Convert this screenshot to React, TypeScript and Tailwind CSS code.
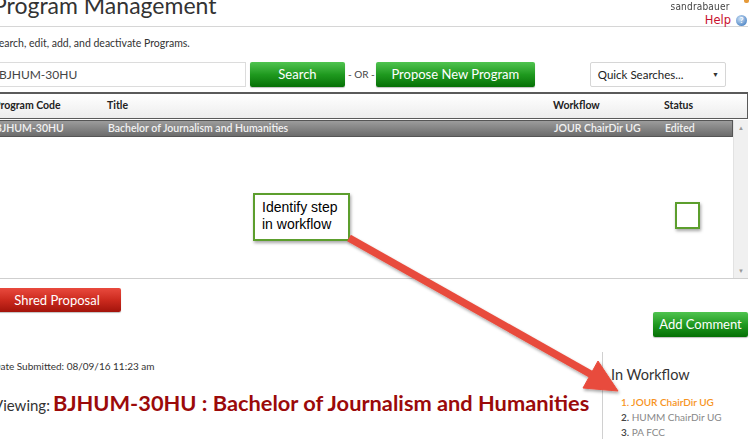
import React from "react";

const greenBtn =
    "h-[25px] rounded-[2px] bg-linear-to-b from-[#4fc44f] via-[#1f9a1f] to-[#057005] text-white text-[13px] leading-[25px] text-center shadow-[0_1px_1px_rgba(0,0,0,0.25)]";

function Annotation() {
    return (
        <>
            {/* callout box */}
            <div className="absolute left-[253px] top-[193px] w-[97px] h-[48px] bg-white border-2 border-[#5c9e2d] shadow-[1px_2px_3px_rgba(0,0,0,0.35)] px-[7px] pt-[4px] font-['Liberation_Sans',sans-serif] text-[14px] leading-[17px] text-black">
                Identify step
                <br />
                in workflow
            </div>
            {/* marker square */}
            <div className="absolute left-[675px] top-[202px] w-[25px] h-[27px] border-2 border-[#5c9e2d] bg-white shadow-[1px_2px_3px_rgba(0,0,0,0.35)]" />
            {/* arrow */}
            <svg className="absolute left-0 top-0 pointer-events-none" width="750" height="439" viewBox="0 0 750 439">
                <defs>
                    <filter id="sh" x="-10%" y="-10%" width="130%" height="130%">
                        <feDropShadow dx="1" dy="2" stdDeviation="1.5" floodColor="#000" floodOpacity="0.35" />
                    </filter>
                </defs>
                <g filter="url(#sh)" fill="#e84c3d" stroke="#e84c3d">
                    <line x1="349" y1="238" x2="594" y2="376" strokeWidth="7.5" />
                    <polygon points="618,391 583,388 598,361" strokeWidth="1" strokeLinejoin="round" />
                </g>
            </svg>
        </>
    );
}

export default function App() {
    return (
        <div className="relative w-[750px] h-[439px] overflow-hidden bg-white font-['Lato',sans-serif] text-[#333]">
            {/* bit of the user avatar peeking in at the corner */}
            <div className="absolute right-[1px] top-0 w-[5px] h-[3px] rounded-b-[2px] bg-[#e59a3a]" />
            <div className="-ml-[7px] w-[755px]">
                {/* Header */}
                <div className="h-[27px] border-b border-[#d6d6d6] flex justify-between items-start">
                    <h1 className="-mt-[8px] text-[23px] leading-[26px] text-[#333]">Program Management</h1>
                    <div className="flex flex-col items-end pr-[1px]">
                        <div className="mr-[17px] text-[10px] leading-[11px] mt-[1px] tracking-[0.2px] text-[#444] font-['DejaVu_Sans',sans-serif] scale-x-90 origin-right">
                            sandrabauer
                        </div>
                        <div className="flex items-center gap-[5px] mt-[1px]">
                            <span className="text-[11.5px] leading-[14px] text-[#c8102e] font-['DejaVu_Sans',sans-serif]">Help</span>
                            <span className="w-[11px] h-[11px] rounded-full bg-[radial-gradient(circle_at_40%_35%,#cfe3f7,#5b8fca_70%)] flex items-center justify-center text-white text-[8px] font-bold leading-none">
                                ?
                            </span>
                        </div>
                    </div>
                </div>

                <p className="mt-[9px] text-[10.5px] leading-[14px] text-[#333]">
                    Search, edit, add, and deactivate Programs.
                </p>

                {/* Search row */}
                <div className="mt-[12px] flex items-center">
                    <div className="w-[253px] h-[25px] border border-[#dcdcdc] pl-[5px] text-[12px] leading-[23px] text-[#444]">
                        BJHUM-30HU
                    </div>
                    <div className={`ml-[4px] w-[95px] ${greenBtn}`}>Search</div>
                    <span className="ml-[3px] text-[10px] text-[#444]">- OR -</span>
                    <div className={`ml-[1px] w-[159px] ${greenBtn}`}>Propose New Program</div>
                    <div className="ml-[55px] w-[136px] h-[25px] border border-[#d6d6d6] rounded-[2px] bg-white flex items-center justify-between pl-[7px] pr-[6px] text-[11.5px] text-[#222]">
                        <span>Quick Searches...</span>
                        <span className="text-[7px] text-[#333]">▼</span>
                    </div>
                </div>

                {/* Table */}
                <div className="mt-[5px] w-[755px] border-b border-[#cfcfcf]">
                    <div className="h-[27px] border-t-2 border-b border-r border-[#5a5a5a] bg-linear-to-b from-white to-[#ededed] grid grid-cols-[113px_446px_111px_1fr] pl-[1px] items-center text-[10.5px] font-bold text-[#222]">
                        <span>Program Code</span>
                        <span>Title</span>
                        <span>Workflow</span>
                        <span>Status</span>
                    </div>
                    <div className="flex mt-[1px]">
                        <div className="flex-1">
                            <div className="h-[17px] border border-[#555] bg-linear-to-b from-[#9c9c9c] to-[#6c6c6c] grid grid-cols-[113px_446px_111px_1fr] pl-[1px] items-center text-[10.5px] font-semibold text-[#f2f2f2]">
                                <span>BJHUM-30HU</span>
                                <span>Bachelor of Journalism and Humanities</span>
                                <span>JOUR ChairDir UG</span>
                                <span>Edited</span>
                            </div>
                        </div>
                        <div className="w-[15px] h-[158px] bg-[#f0f0f0] border-l border-[#e2e2e2] flex flex-col items-center justify-between py-[3px] text-[6px] text-[#999]">
                            <span>▲</span>
                            <span>▼</span>
                        </div>
                    </div>
                </div>

                {/* Actions */}
                <div className="mt-[9px] w-[128px] h-[24px] rounded-[2px] bg-linear-to-b from-[#e9493d] via-[#cc2a1e] to-[#a3130b] text-white text-[13px] leading-[24px] text-center shadow-[0_1px_1px_rgba(0,0,0,0.25)]">
                    Shred Proposal
                </div>
                <div className="flex justify-end">
                    <div className={`w-[95px] ${greenBtn}`}>Add Comment</div>
                </div>

                {/* Lower section */}
                <div className="mt-[15px] flex">
                    <div className="w-[609px]">
                        <div className="mt-[7px] text-[10px] leading-[14px] text-[#333]">
                            Date Submitted: 08/09/16 11:23 am
                        </div>
                        <div className="mt-[17px] flex items-baseline">
                            <span className="text-[15px] text-[#333]">Viewing:</span>
                            <span className="ml-[3px] text-[21.8px] font-bold text-[#9b0a0a] leading-[26px]">
                                BJHUM-30HU : Bachelor of Journalism and Humanities
                            </span>
                        </div>
                    </div>
                    <div className="flex-1 h-[90px] border-l border-[#d0d0d0] pl-[8px]">
                        <div className="mt-[14px] text-[14.5px] leading-[18px] text-[#333]">In Workflow</div>
                        <ol className="mt-[11px] pl-[10px] text-[10px] leading-[15px]">
                            <li className="text-[#f7941d] font-semibold">1. JOUR ChairDir UG</li>
                            <li className="text-[#888]">
                                <span className="text-[#444] font-semibold">2.</span> HUMM ChairDir UG
                            </li>
                            <li className="text-[#888]">
                                <span className="text-[#444] font-semibold">3.</span> PA FCC
                            </li>
                        </ol>
                    </div>
                </div>
            </div>

            <Annotation />
        </div>
    );
}
